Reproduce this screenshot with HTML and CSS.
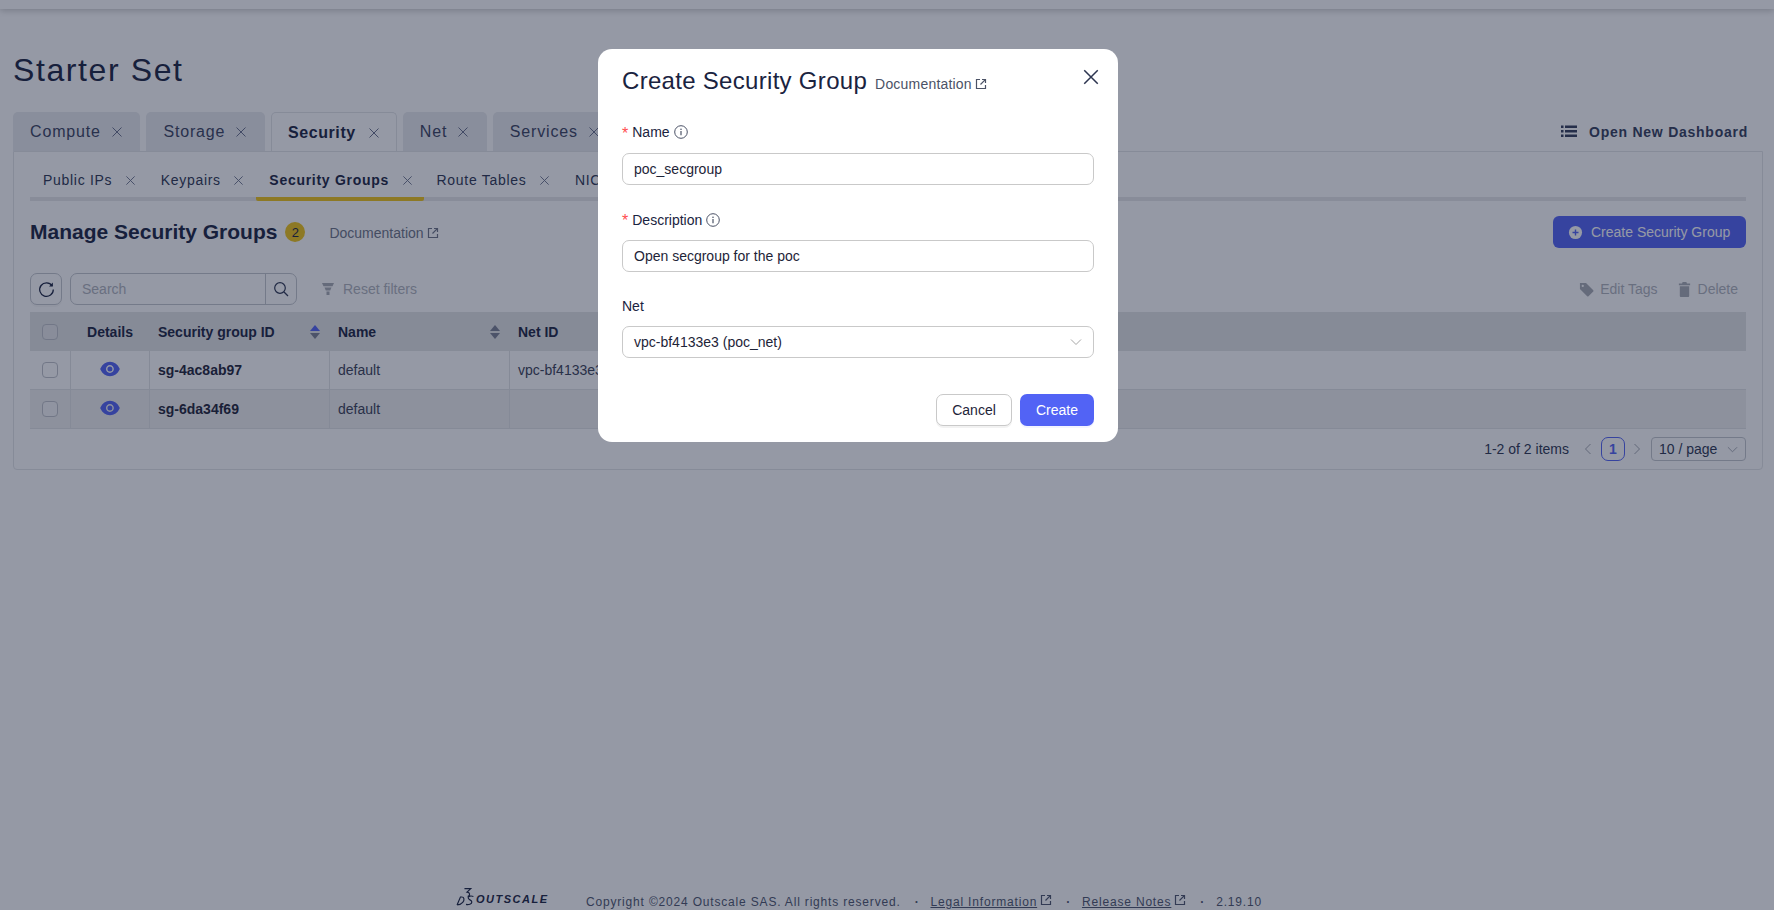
FILE: index.html
```html
<!DOCTYPE html>
<html lang="en">
<head>
<meta charset="utf-8">
<title>Manage Security Groups</title>
<link rel="stylesheet" href="styles.css">
</head>
<body>
<svg class="sprite" aria-hidden="true">
  <symbol id="x" viewBox="0 0 12 12"><path d="M1.5 1.5l9 9M10.500 1.500l-9 9" fill="none" stroke="currentColor" stroke-width="1"/></symbol>
  <symbol id="ext" viewBox="0 0 12 12"><path d="M5 1.500H1.500v9h9V7M7 1.500h3.500V5M10.300 1.700L5.500 6.500" fill="none" stroke="currentColor" stroke-width="1.200"/></symbol>
  <symbol id="eye" viewBox="64 64 896 896"><path fill="currentColor" d="M396 512a112 112 0 1 0 224 0 112 112 0 1 0-224 0zm546.200-25.800C847.400 286.500 704.100 186 512 186c-192.200 0-335.400 100.500-430.200 300.300a60.300 60.300 0 0 0 0 51.500C176.600 737.500 319.900 838 512 838c192.200 0 335.400-100.500 430.200-300.300 7.700-16.200 7.700-35 0-51.500zM508 688c-97.200 0-176-78.800-176-176s78.800-176 176-176 176 78.800 176 176-78.800 176-176 176z"/></symbol>
  <symbol id="info" viewBox="0 0 14 14"><circle cx="7" cy="7" r="6.300" fill="none" stroke="currentColor" stroke-width="1"/><path d="M7 6v4.200" stroke="currentColor" stroke-width="1.200"/><circle cx="7" cy="4.200" r=".8" fill="currentColor"/></symbol>
  <symbol id="chev" viewBox="0 0 12 12"><path d="M1 3.500l5 5 5-5" fill="none" stroke="currentColor" stroke-width="1"/></symbol>
</svg>

<div class="page">
  <div class="topbar"></div>
  <h1 class="title">Starter Set</h1>

  <div class="tabs">
    <div class="tab">Compute<svg class="x"><use href="#x"/></svg></div>
    <div class="tab">Storage<svg class="x"><use href="#x"/></svg></div>
    <div class="tab tab-on">Security<svg class="x"><use href="#x"/></svg></div>
    <div class="tab">Net<svg class="x"><use href="#x"/></svg></div>
    <div class="tab">Services<svg class="x"><use href="#x"/></svg></div>
    <div class="open-new">
      <svg class="list-ic" viewBox="0 0 16 13"><path fill="currentColor" d="M0 .5h2.500V3H0zM0 5h2.500v2.500H0zM0 9.500h2.500V12H0zM4 .5h12V3H4zM4 5h12v2.500H4zM4 9.500h12V12H4z"/></svg>
      <span>Open New Dashboard</span>
    </div>
  </div>

  <section class="panel">
    <div class="subtabs">
      <div class="subtab">Public IPs<svg class="x"><use href="#x"/></svg></div>
      <div class="subtab">Keypairs<svg class="x"><use href="#x"/></svg></div>
      <div class="subtab subtab-on">Security Groups<svg class="x"><use href="#x"/></svg></div>
      <div class="subtab">Route Tables<svg class="x"><use href="#x"/></svg></div>
      <div class="subtab">NICs<svg class="x"><use href="#x"/></svg></div>
    </div>

    <div class="head">
      <h2 class="head-title">Manage Security Groups</h2>
      <span class="badge">2</span>
      <span class="doc">Documentation<svg class="ext"><use href="#ext"/></svg></span>
      <button class="create-btn">
        <svg class="plus" viewBox="0 0 16 16"><circle cx="8" cy="8" r="7" fill="currentColor"/><path d="M8 4.800v6.400M4.800 8h6.400" stroke="#5263f5" stroke-width="1.500"/></svg>
        Create Security Group
      </button>
    </div>

    <div class="toolbar">
      <button class="refresh">
        <svg viewBox="0 0 16 16" class="refresh-ic"><path d="M13.300 4.500A6.400 6.400 0 1 0 14.400 8" fill="none" stroke="currentColor" stroke-width="1.200"/><path d="M14 1.500v3.600h-3.600z" fill="currentColor"/></svg>
      </button>
      <div class="search">
        <span class="search-ph">Search</span>
        <span class="search-btn"><svg viewBox="0 0 16 16" class="search-ic"><circle cx="7" cy="7" r="5.300" fill="none" stroke="currentColor" stroke-width="1.200"/><path d="M11 11l4 4" stroke="currentColor" stroke-width="1.300"/></svg></span>
      </div>
      <div class="reset">
        <svg viewBox="0 0 14 14" class="funnel"><path fill="currentColor" d="M1 1h12l-1.500 3.200h-9zM3.500 5.400h7L9.200 8.600H4.800zM5.500 9.600h3V13h-3z"/></svg>
        Reset filters
      </div>
      <div class="actions">
        <span class="action"><svg viewBox="0 0 16 16" class="act-ic"><path fill="currentColor" d="M1 1h6.500l7.700 7.700a1 1 0 0 1 0 1.400l-5.100 5.100a1 1 0 0 1-1.400 0L1 7.500zM4 3a1.200 1.200 0 1 0 0 2.400A1.200 1.200 0 0 0 4 3z"/></svg>Edit Tags</span>
        <span class="action"><svg viewBox="0 0 14 16" class="act-ic"><path fill="currentColor" d="M5 0h4l.6 1.500H13V3.500H1V1.500h3.400zM2 4.500h10V15a1 1 0 0 1-1 1H3a1 1 0 0 1-1-1z"/></svg>Delete</span>
      </div>
    </div>

    <div class="table">
      <div class="row row-head">
        <div class="cell cell-check"><span class="check"></span></div>
        <div class="cell cell-details">Details</div>
        <div class="cell cell-sort">Security group ID
          <span class="sorter"><i class="up up-on"></i><i class="down"></i></span>
        </div>
        <div class="cell cell-sort">Name
          <span class="sorter"><i class="up"></i><i class="down"></i></span>
        </div>
        <div class="cell">Net ID</div>
      </div>
      <div class="row">
        <div class="cell cell-check"><span class="check"></span></div>
        <div class="cell cell-details"><svg class="eye"><use href="#eye"/></svg></div>
        <div class="cell cell-id">sg-4ac8ab97</div>
        <div class="cell">default</div>
        <div class="cell">vpc-bf4133e3</div>
      </div>
      <div class="row row-alt">
        <div class="cell cell-check"><span class="check"></span></div>
        <div class="cell cell-details"><svg class="eye"><use href="#eye"/></svg></div>
        <div class="cell cell-id">sg-6da34f69</div>
        <div class="cell">default</div>
        <div class="cell"></div>
      </div>
    </div>

    <div class="pager">
      <span class="pager-total">1-2 of 2 items</span>
      <svg class="pager-arrow"><use href="#chev"/></svg>
      <span class="pager-cur">1</span>
      <svg class="pager-arrow pager-next"><use href="#chev"/></svg>
      <span class="pager-size">10 / page<svg class="pager-chev"><use href="#chev"/></svg></span>
    </div>
  </section>

  <footer class="footer">
    <span class="logo">
      <svg class="logo-mark" viewBox="0 0 18 18"><path d="M8 1.500h6l-3.500 3.300c3 .2 3.200 3.200.5 4.200M1 17l3.200-7.500h1.300c2.400 0 2.700 3 .9 5-1.300 1.500-3.500 2.500-5.400 2.500M16.500 9c-2-.8-5-.6-5 1.300 0 2 3.500 1.800 3.500 3.900 0 2-3 2.800-5.500 2.300" fill="none" stroke="currentColor" stroke-width="1.100"/></svg>
      <span class="logo-name">OUTSCALE</span>
    </span>
    <span class="foot-text">Copyright ©2024 Outscale SAS. All rights reserved.</span>
    <span class="dot">·</span>
    <span class="foot-link"><u>Legal Information</u><svg class="ext"><use href="#ext"/></svg></span>
    <span class="dot">·</span>
    <span class="foot-link"><u>Release Notes</u><svg class="ext"><use href="#ext"/></svg></span>
    <span class="dot">·</span>
    <span class="foot-text">2.19.10</span>
  </footer>
</div>

<div class="overlay"></div>

<div class="modal">
  <div class="modal-head">
    <h3 class="modal-title">Create Security Group</h3>
    <span class="modal-doc">Documentation<svg class="ext"><use href="#ext"/></svg></span>
    <svg class="modal-close"><use href="#x"/></svg>
  </div>
  <div class="field">
    <label class="label"><span class="req">*</span>Name<svg class="info"><use href="#info"/></svg></label>
    <div class="input">poc_secgroup</div>
  </div>
  <div class="field">
    <label class="label"><span class="req">*</span>Description<svg class="info"><use href="#info"/></svg></label>
    <div class="input">Open secgroup for the poc</div>
  </div>
  <div class="field">
    <label class="label">Net</label>
    <div class="input input-select">vpc-bf4133e3 (poc_net)<svg class="select-chev"><use href="#chev"/></svg></div>
  </div>
  <div class="modal-foot">
    <button class="btn btn-cancel">Cancel</button>
    <button class="btn btn-create">Create</button>
  </div>
</div>
</body>
</html>
```
FILE: styles.css
```css
* { box-sizing: border-box; }
html, body { margin: 0; height: 100%; overflow: hidden; }
body { font-family: "Liberation Sans", Arial, sans-serif; font-size: 14px; color: #1a2340; background: #fff; }
button { font-family: inherit; }
.sprite { display: none; }

.page { display: flex; flex-direction: column; height: 910px; }
.topbar { height: 9px; flex: none; background: #fff; box-shadow: 0 2px 6px rgba(0,0,0,.2); }

.title { margin: 41px 0 0 13px; height: 40px; font-size: 32px; line-height: 40px; font-weight: 400; letter-spacing: 1.6px; color: #1a2340; }

.tabs { display: flex; gap: 6px; margin: 22px 0 0 13px; padding-right: 26px; height: 39px; align-items: flex-end; }
.tab { display: flex; align-items: center; height: 39px; padding: 1px 17.500px 0 17px; background: #e9ebee; border-radius: 5px 5px 0 0; font-size: 16px; letter-spacing: .85px; color: #39425e; white-space: nowrap; }
.tab .x { width: 12px; height: 12px; margin-left: 10px; color: #68708a; }
.tab-on { background: #fff; border: 1px solid #e3e5e8; border-bottom-color: #fff; padding: 1px 16px 0 16px; font-weight: 700; letter-spacing: .6px; color: #1a2340; height: 40px; margin-bottom: -1px; }
.tab-on .x { margin-left: 12px; }
.open-new { display: flex; align-items: center; gap: 12px; margin-left: auto; align-self: center; font-size: 14px; font-weight: 700; letter-spacing: .75px; color: #333c5a; }
.list-ic { width: 16px; height: 13px; }

.panel { margin: 0 11px 0 13px; height: 319px; border: 1px solid #e3e5e8; border-radius: 0 0 4px 4px; padding: 0 16px; flex: none; }

.subtabs { display: flex; height: 49px; padding-top: 16px; border-bottom: 4px solid #e7e8ea; }
.subtab { display: flex; align-items: center; height: 33px; padding: 0 12px 5px 13px; font-size: 14px; letter-spacing: .7px; color: #2c3550; white-space: nowrap; border-bottom: 4px solid transparent; margin-bottom: -4px; }
.subtab .x { width: 11px; height: 11px; margin-left: 12.500px; color: #68708a; }
.subtab-on { font-weight: 700; color: #1a2340; border-bottom-color: #f0c516; border-radius: 2px; letter-spacing: .72px; padding-right: 11px; }

.head { display: flex; align-items: center; height: 32px; margin-top: 15px; }
.head-title { margin: 0; font-size: 21px; font-weight: 700; color: #1a2340; }
.badge { display: inline-flex; width: 20px; height: 20px; margin-left: 8px; border-radius: 50%; background: #f0c516; align-items: center; justify-content: center; font-size: 13px; color: #1a2340; }
.doc { margin-left: 24px; margin-top: 2px; display: inline-flex; align-items: center; color: #6d7486; font-size: 14px; }
.ext { width: 12px; height: 12px; margin-left: 3px; }
.create-btn { margin-left: auto; display: flex; align-items: center; gap: 8px; height: 32px; width: 193px; padding: 0 15px; border: 0; border-radius: 6px; background: #5263f5; color: #fff; font-size: 14px; }
.plus { width: 15px; height: 15px; color: #fff; }

.toolbar { display: flex; align-items: center; height: 32px; margin-top: 25px; }
.refresh { width: 32px; height: 32px; padding: 0; display: flex; align-items: center; justify-content: center; border: 1px solid #c4c7cd; border-radius: 7px; background: #fff; color: #1a2340; box-shadow: 0 2px 0 rgba(0,0,0,.03); }
.refresh-ic { width: 17px; height: 17px; }
.search { display: flex; width: 227px; height: 32px; margin-left: 8px; border: 1px solid #c4c7cd; border-radius: 7px; }
.search-ph { flex: 1; padding-left: 11px; line-height: 30px; color: #b0b3bb; }
.search-btn { width: 31px; border-left: 1px solid #c4c7cd; display: flex; align-items: center; justify-content: center; color: #2c3550; }
.search-ic { width: 16px; height: 16px; }
.reset { display: flex; align-items: center; gap: 8px; margin-left: 24px; color: #b0b3bb; }
.funnel { width: 14px; height: 14px; color: #a8abb3; }
.actions { margin-left: auto; display: flex; gap: 19px; padding-right: 8px; }
.action { display: flex; align-items: center; gap: 6px; color: #b0b3bb; }
.act-ic { width: 15px; height: 15px; color: #a8abb3; }

.table { margin-top: 7px; }
.row { display: grid; grid-template-columns: 40px 79px 180px 180px 1fr; height: 39px; border-bottom: 1px solid #e2e3e6; }
.row-head { height: 39px; background: #e3e5e5; border-bottom: 0; font-weight: 700; color: #1a2340; }
.row-alt { background: #f0f0f1; }
.cell { display: flex; align-items: center; padding: 0 8px; border-left: 1px solid #e2e3e6; color: #3a4055; white-space: nowrap; }
.cell:first-child { border-left: 0; }
.row-head .cell { border-left-color: transparent; color: #1a2340; }
.cell-check { justify-content: center; padding: 0; }
.cell-details { justify-content: center; padding: 0; }
.cell-id { font-weight: 700; color: #1e2438; }
.cell-sort { justify-content: space-between; }
.check { width: 16px; height: 16px; border: 1px solid #bfc2c8; border-radius: 4px; background: #fff; }
.row-alt .check { background: #f6f6f7; }
.row-head .check { background: #e9eaeb; }
.eye { width: 20px; height: 20px; color: #5263f5; margin-top: -3px; }
.sorter { display: flex; flex-direction: column; gap: 2px; margin-right: 1px; }
.up, .down { display: block; width: 0; height: 0; border-left: 5px solid transparent; border-right: 5px solid transparent; }
.up { border-bottom: 6px solid #7a8092; }
.down { border-top: 6px solid #7a8092; }
.up-on { border-bottom-color: #5263f5; }

.pager { display: flex; align-items: center; justify-content: flex-end; margin-top: 8px; height: 24px; }
.pager-total { color: #2c3550; }
.pager-arrow { width: 12px; height: 12px; margin-left: 13px; color: #a0a4ae; transform: rotate(90deg); }
.pager-next { margin-left: 6px; transform: rotate(-90deg); }
.pager-cur { display: flex; width: 24px; height: 24px; margin-left: 7px; align-items: center; justify-content: center; border: 1px solid #5263f5; border-radius: 7px; color: #5263f5; font-weight: 700; }
.pager-size { display: flex; align-items: center; justify-content: space-between; width: 95px; height: 24px; margin-left: 8px; padding: 0 7px; border: 1px solid #c4c7cd; border-radius: 4px; color: #2c3550; }
.pager-chev { width: 11px; height: 11px; color: #a0a4ae; }

.footer { margin-top: auto; display: flex; align-items: flex-end; height: 24px; margin-bottom: 1px; padding-left: 456px; font-size: 12px; letter-spacing: .82px; color: #4d556c; white-space: nowrap; flex: none; }
.logo { display: flex; align-items: flex-end; width: 130px; color: #1a2340; height: 20px; margin-bottom: 3px; }
.logo-mark { width: 19px; height: 19px; margin-right: 1px; }
.logo-name { font-size: 11px; font-weight: 700; font-style: italic; letter-spacing: 1.5px; line-height: 14px; }
.dot { margin: 0 11px 0 14px; font-weight: 700; }
.foot-link .ext { margin-left: 3px; }

.overlay { position: fixed; inset: 0; background: rgba(20, 29, 55, .45); }

.modal { position: fixed; left: 598px; top: 49px; width: 520px; height: 393px; padding: 16px 24px 0; background: #fff; border-radius: 14px; }
.modal-head { display: flex; align-items: center; height: 32px; position: relative; margin-bottom: 24px; }
.modal-title { margin: 0; font-size: 24px; font-weight: 400; letter-spacing: .3px; color: #1a2340; }
.modal-doc { display: inline-flex; align-items: center; margin-left: 8px; margin-top: 6px; letter-spacing: .2px; color: #4b5266; }
.modal-close { position: absolute; right: -6px; top: 3px; width: 18px; height: 18px; color: #2c3550; }
.field { margin-bottom: 22.500px; }
.field + .field { padding-top: 1px; }
.field + .field .label { margin-bottom: 9px; }
.label { display: flex; align-items: center; height: 22px; margin-bottom: 10px; color: #1a2340; font-size: 14px; }
.req { color: #ff4d4f; margin-right: 4px; font-size: 16px; line-height: 16px; padding-top: 3px; }
.info { width: 14px; height: 14px; margin-left: 4px; color: #4b5266; }
.input { display: flex; align-items: center; height: 32px; padding: 0 11px; border: 1px solid #c9c9c9; border-radius: 7px; color: #1e2438; font-size: 14px; }
.input-select { justify-content: space-between; }
.select-chev { width: 12px; height: 12px; color: #a6a6a6; }
.modal-foot { display: flex; justify-content: flex-end; gap: 8px; margin-top: 36px; }
.btn { height: 32px; border-radius: 7px; font-size: 14px; padding: 0; }
.btn-cancel { width: 76px; background: #fff; border: 1px solid #c9c9c9; color: #1e2438; box-shadow: 0 2px 0 rgba(0,0,0,.05); }
.btn-create { width: 74px; background: #5263f5; border: 0; color: #fff; box-shadow: 0 2px 0 rgba(5,40,255,.05); }
```
